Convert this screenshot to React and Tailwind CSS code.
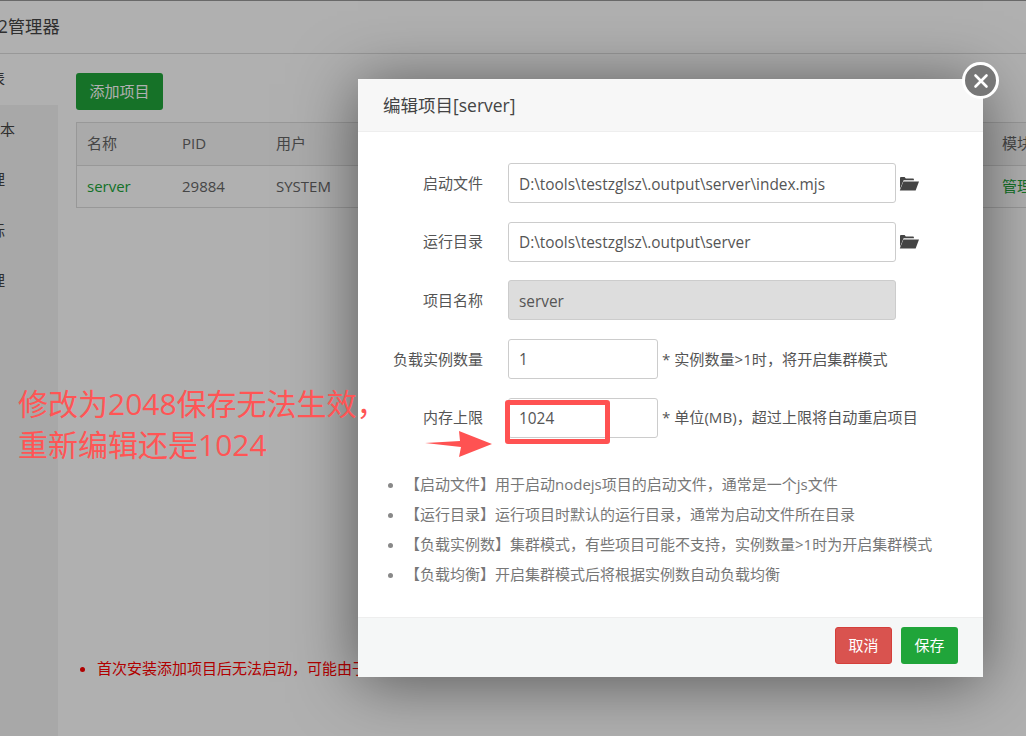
const font = { fontFamily: '"Open Sans", "Noto Sans CJK SC", sans-serif' };

const menu = [
  { label: '项目列表', className: '-ml-[55px] bg-white' },
  { label: '版本', className: '-ml-[15px]' },
  { label: '管理', className: '-ml-[25px]' },
  { label: '指标', className: '-ml-[25px]' },
  { label: '管理', className: '-ml-[25px]' },
];

const tips = [
  '【启动文件】用于启动nodejs项目的启动文件，通常是一个js文件',
  '【运行目录】运行项目时默认的运行目录，通常为启动文件所在目录',
  '【负载实例数】集群模式，有些项目可能不支持，实例数量>1时为开启集群模式',
  '【负载均衡】开启集群模式后将根据实例数自动负载均衡',
];

const FolderIcon = () => (
  <svg viewBox="0 0 20 15" className="ml-[3px] h-[15px] w-[20px] shrink-0" fill="#444">
    <path d="M1 13V2.2C1 1.5 1.5 1 2.2 1h3.4l1.2 1.4h7c.7 0 1.1.4 1.1 1v.9H4.6z" />
    <path d="M4.4 5.4H20L16.6 14.6H.8z" />
  </svg>
);

const Field = ({ label, value, folder, hint, disabled, small }) => (
  <div className="mb-[18.67px] flex items-center">
    <label className="w-[125px] shrink-0 text-right text-[15px] text-[#555]">{label}</label>
    <input
      readOnly
      disabled={disabled}
      value={value}
      className={`ml-[25px] h-[40px] rounded-[3px] border border-[#ccc] px-[10px] pt-[2px] text-[15.4px] text-[#555] ${
        small ? 'w-[150px]' : 'w-[388px]'
      } ${disabled ? 'bg-[#ddd]' : 'bg-white'}`}
    />
    {folder && <FolderIcon />}
    {hint && <span className="ml-[4px] text-[15.1px] text-[#555]">{hint}</span>}
  </div>
);

const App = () => {
  return (
    <div className="relative h-[736px] w-[1026px] overflow-hidden bg-white text-[#444]" style={font}>
      <div className="flex h-[54px] items-center border-t border-b border-[#ddd] border-t-[#999]">
        <span className="-ml-[28px] text-[17.3px] whitespace-nowrap">PM2管理器</span>
      </div>
      <div className="flex h-[682px]">
        <div className="w-[58px] shrink-0 overflow-hidden bg-[#f3f3f3]">
          {menu.map((item, i) => (
            <div key={i} className={`flex h-[50.5px] items-center pb-[2px] text-[15px] whitespace-nowrap ${item.className}`}>
              {item.label}
            </div>
          ))}
        </div>
        <div className="min-w-0 flex-1 pt-[19px] pl-[18px]">
          <button className="h-[37px] w-[87px] rounded-[3px] bg-[#20a53a] text-[15px] text-white">添加项目</button>
          <div className="mt-[12px] w-[1100px] border border-[#ddd] text-[15px] text-[#666]">
            <div className="flex h-[43px] items-center border-b border-[#ddd] bg-[#f6f6f6] px-[10px] pb-[2px]">
              <span className="w-[95px]">名称</span>
              <span className="w-[94px]">PID</span>
              <span className="w-[726px]">用户</span>
              <span>模块</span>
            </div>
            <div className="flex h-[41px] items-center px-[10px]">
              <span className="w-[95px] text-[#20a53a]">server</span>
              <span className="w-[94px]">29884</span>
              <span className="w-[726px]">SYSTEM</span>
              <span className="text-[#20a53a]">管理</span>
            </div>
          </div>
          <ul className="mt-[449px] ml-[21px] list-disc whitespace-nowrap text-[15px] text-[#f00]">
            <li>首次安装添加项目后无法启动，可能由于系统权限不足</li>
          </ul>
        </div>
      </div>

      <div className="absolute inset-0 bg-black/[0.31]" />

      <div className="absolute top-[79px] left-[358px] flex h-[598px] w-[625px] flex-col bg-white shadow-[0_5px_60px_rgba(0,0,0,0.5)]">
        <div className="flex h-[53px] shrink-0 items-center border-b border-[#eee] bg-[#f7f7f7] px-[25px] text-[17.5px] text-[#444]">
          编辑项目[server]
        </div>
        <div className="flex-1 pt-[31px]">
          <Field label="启动文件" value="D:\tools\testzglsz\.output\server\index.mjs" folder />
          <Field label="运行目录" value="D:\tools\testzglsz\.output\server" folder />
          <Field label="项目名称" value="server" disabled />
          <Field label="负载实例数量" value="1" small hint="* 实例数量>1时，将开启集群模式" />
          <Field label="内存上限" value="1024" small hint="* 单位(MB)，超过上限将自动重启项目" />
          <ul className="mt-[31px] ml-[47px] list-disc text-[15px] leading-[30px] text-[#777] marker:text-[#888]">
            {tips.map((tip) => (
              <li key={tip}>{tip}</li>
            ))}
          </ul>
        </div>
        <div className="flex h-[60px] shrink-0 items-start justify-end gap-[9px] border-t border-[#eee] bg-[#f5f7f7] pt-[9px] pr-[25px]">
          <button className="h-[37px] w-[57px] rounded-[3px] border border-[#d43f3a] bg-[#d9534f] text-[15px] text-white">取消</button>
          <button className="h-[37px] w-[57px] rounded-[3px] bg-[#20a53a] text-[15px] text-white">保存</button>
        </div>
      </div>

      <button className="absolute top-[62px] left-[962px] flex h-[37px] w-[37px] items-center justify-center rounded-full border-[3px] border-white bg-[#777]">
        <svg viewBox="0 0 16 16" className="h-[16px] w-[16px]" stroke="white" strokeWidth="2.6" strokeLinecap="round">
          <path d="M2.5 2.5l11 11M13.5 2.5l-11 11" />
        </svg>
      </button>

      <div className="absolute top-[383px] left-[18px] text-[30px] leading-[41px] whitespace-nowrap text-[#ff5555]">
        修改为2048保存无法生效，<br />重新编辑还是1024
      </div>
      <div className="absolute top-[400px] left-[505px] h-[44px] w-[105px] rounded-[3px] border-[5px] border-[#ff5252]" />
      <svg viewBox="0 0 70 28" className="absolute top-[430px] left-[424px] h-[28px] w-[70px]" fill="#ff5252">
        <path d="M1 13L36 11 35 1 68 14 35 27 37 17z" />
      </svg>
    </div>
  );
};

export default App;
